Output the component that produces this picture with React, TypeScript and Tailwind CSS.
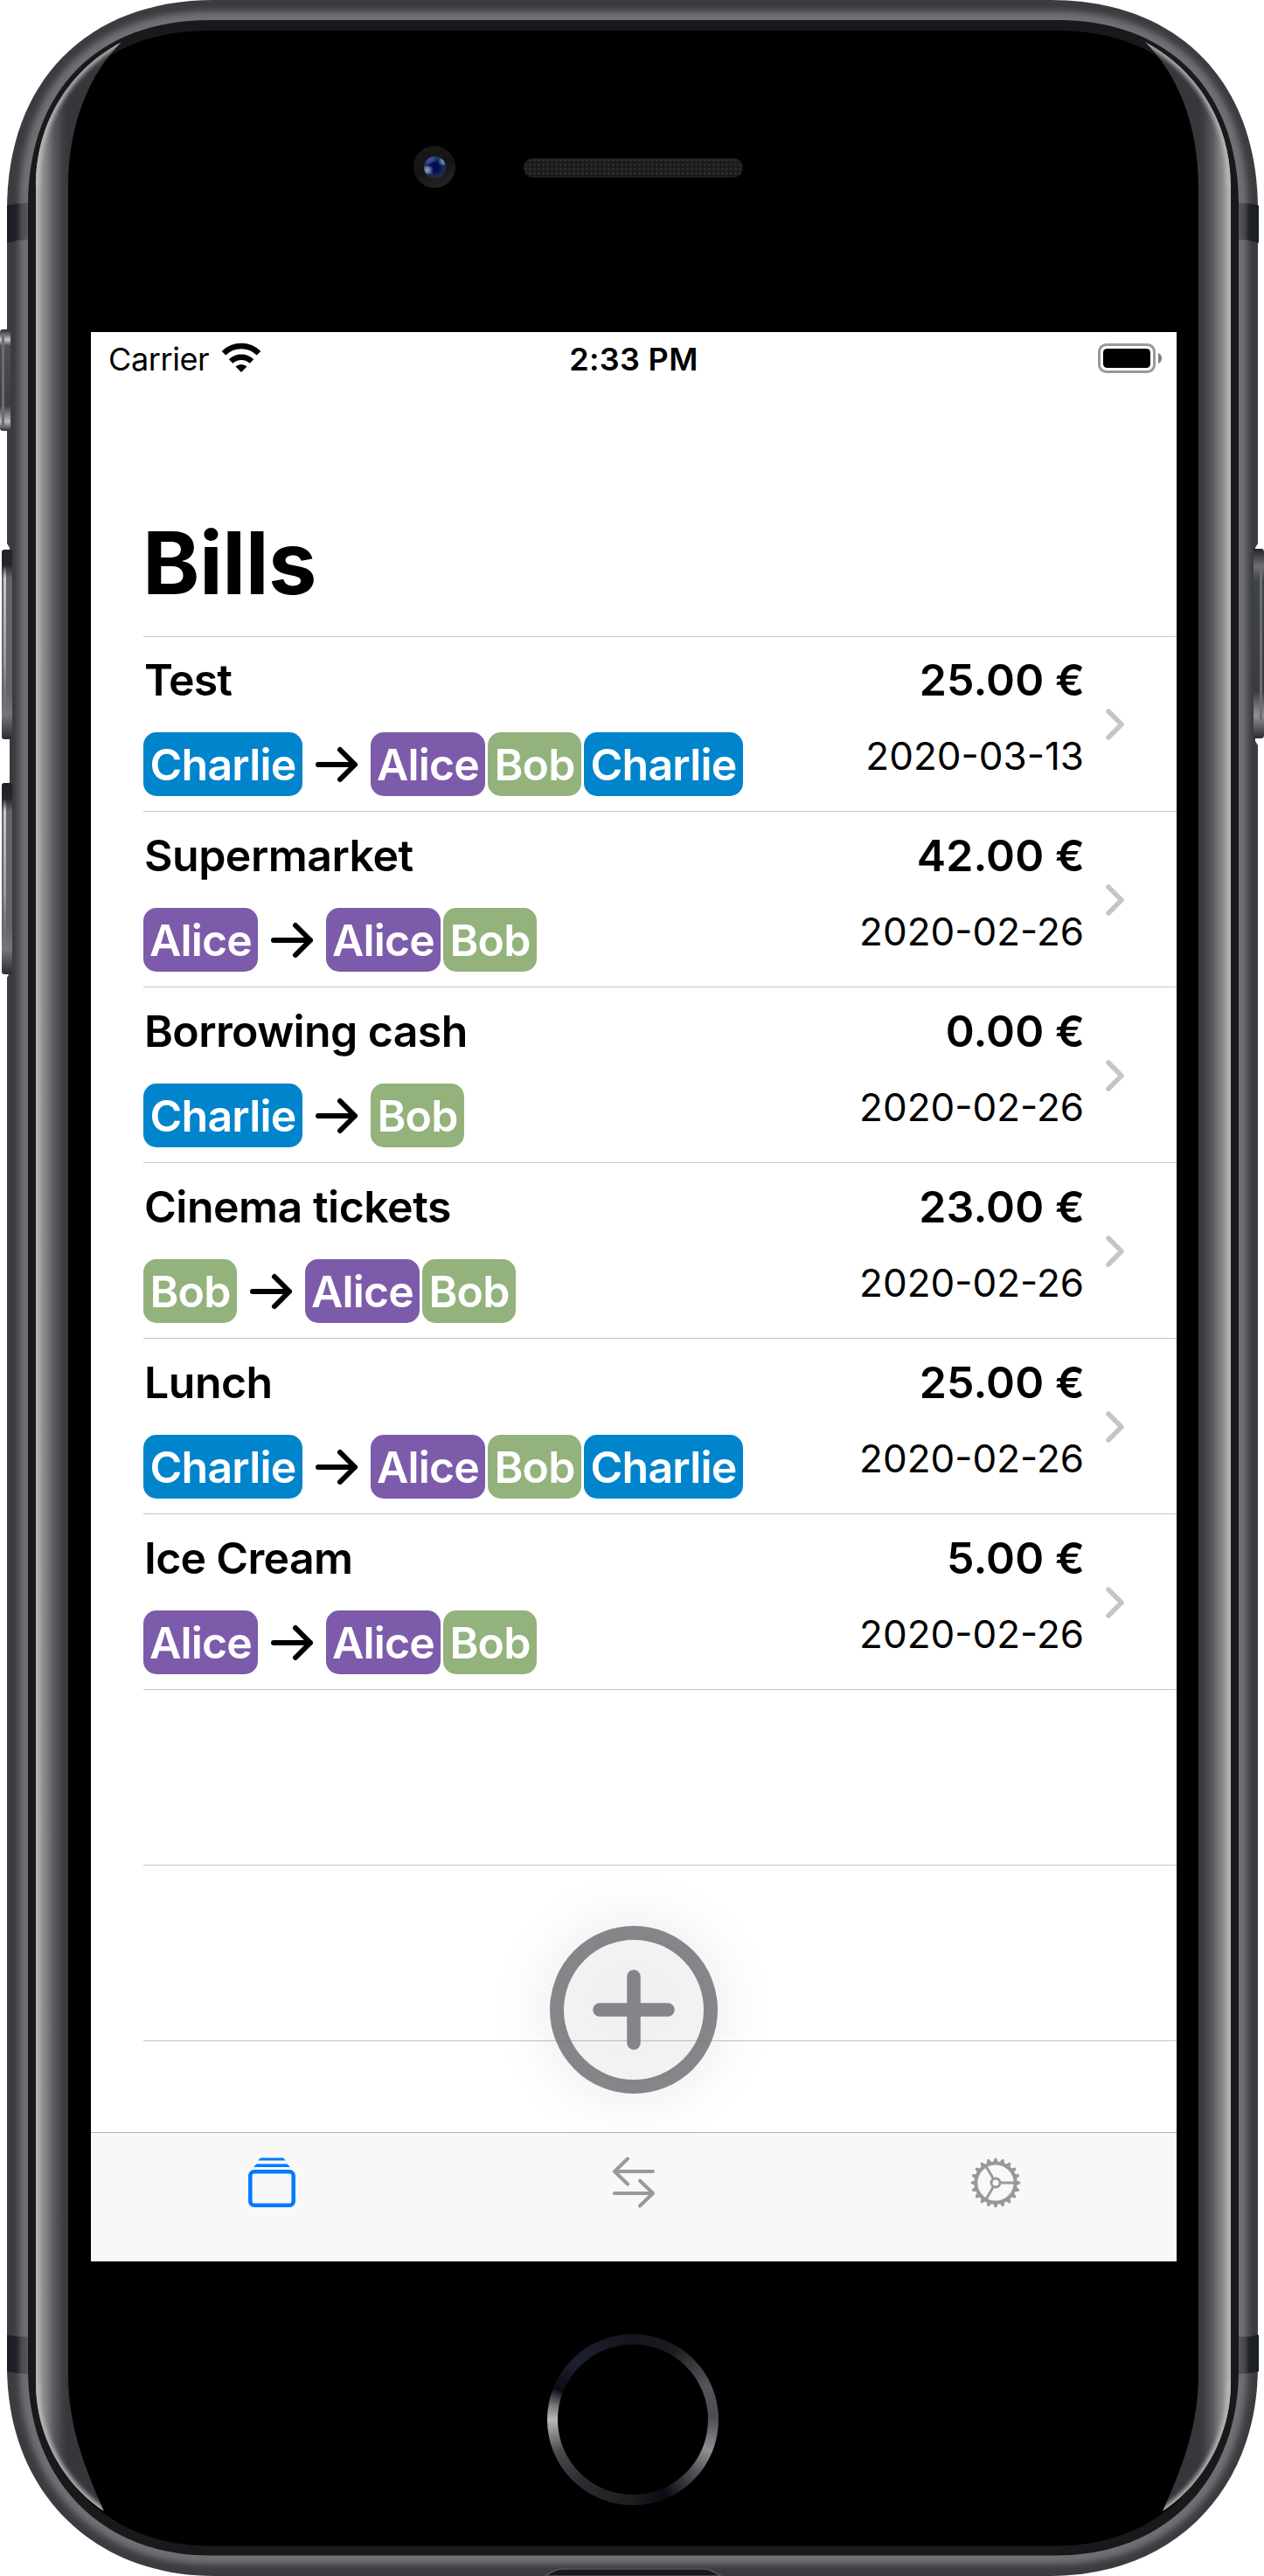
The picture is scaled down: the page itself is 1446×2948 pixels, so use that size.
import React from "react";

type Person = "Alice" | "Bob" | "Charlie";
type Bill = { title: string; tracking: string; from: Person; to: Person[]; amount: string; date: string };

const bills: Bill[] = [
  { title: "Test", tracking: "tracking-[-1px]", from: "Charlie", to: ["Alice", "Bob", "Charlie"], amount: "25.00 €", date: "2020-03-13" },
  { title: "Supermarket", tracking: "tracking-[-0.5px]", from: "Alice", to: ["Alice", "Bob"], amount: "42.00 €", date: "2020-02-26" },
  { title: "Borrowing cash", tracking: "tracking-[-0.6px]", from: "Charlie", to: ["Bob"], amount: "0.00 €", date: "2020-02-26" },
  { title: "Cinema tickets", tracking: "tracking-[-0.5px]", from: "Bob", to: ["Alice", "Bob"], amount: "23.00 €", date: "2020-02-26" },
  { title: "Lunch", tracking: "tracking-[-0.5px]", from: "Charlie", to: ["Alice", "Bob", "Charlie"], amount: "25.00 €", date: "2020-02-26" },
  { title: "Ice Cream", tracking: "tracking-[-0.7px]", from: "Alice", to: ["Alice", "Bob"], amount: "5.00 €", date: "2020-02-26" },
];

const chipStyle: Record<Person, string> = {
  Alice: "w-[131px] bg-[#7d5bab]",
  Bob: "w-[107px] bg-[#93b27c]",
  Charlie: "w-[182px] bg-[#0084cb]",
};

function Chip({ name }: { name: Person }) {
  return (
    <span className={`flex h-[73px] items-center justify-center rounded-[15px] text-[50px] font-semibold leading-[60px] tracking-[-0.8px] text-white ${chipStyle[name]}`}>
      {name}
    </span>
  );
}

function Row({ bill, first }: { bill: Bill; first: boolean }) {
  return (
    <li className={`ml-[60px] flex border-t border-[#c6c6c8] ${first ? "h-[200px] pt-[19px]" : "h-[201px] pt-[20px]"}`}>
      <div className="flex-1">
        <div className={`h-[60px] whitespace-nowrap pl-px text-[50px] font-semibold leading-[60px] ${bill.tracking}`}>{bill.title}</div>
        <div className="mt-[30px] flex items-center gap-[3px]">
          <Chip name={bill.from} />
          <svg className="mx-[9px] h-[48px] w-[54px]" viewBox="0 0 54 48" fill="none" stroke="#000" strokeWidth="6" strokeLinecap="round" strokeLinejoin="round">
            <path d="M6 24H48M31 7L48 24L31 41" />
          </svg>
          {bill.to.map((p) => (
            <Chip key={p} name={p} />
          ))}
        </div>
      </div>
      <div className="text-right">
        <div className="h-[60px] whitespace-pre text-[50px] font-semibold leading-[60px] tracking-[0.1px]">{bill.amount}</div>
        <div className="mt-[27px] pr-px text-[44px] leading-[60px]">{bill.date}</div>
      </div>
      <svg className="ml-[22px] mr-[57px] mt-[61px] h-[40px] w-[26px]" viewBox="0 0 26 40" fill="none" stroke="#c5c5c7" strokeWidth="5.5" strokeLinecap="round" strokeLinejoin="round">
        <path d="M5 5L20 20L5 35" />
      </svg>
    </li>
  );
}

const OUTER =
  "M8 240C8 94 99 0 245 0H1202C1348 0 1439 94 1439 240V2708C1439 2849 1343 2948 1202 2948H245C104 2948 8 2849 8 2708Z";
const INNER =
  "M32 235C32 103 112 23 240 23H1209C1337 23 1417 103 1417 235V2712C1417 2837 1334 2924.500 1209 2924.500H240C115 2924.500 32 2837 32 2712Z";
const GLASS =
  "M41 235C41 113 115 35 240 35H1209C1334 35 1408 113 1408 235V2712C1408 2830 1327 2913.500 1209 2913.500H240C122 2913.500 41 2830 41 2712Z";
const SHEEN =
  "M139 48C81 79 41 138 41 214V2727C41 2790 75 2845 119 2874C95 2820 78 2775 78 2716V215C78 140 103 84 139 48Z";

function Sheen() {
  return (
    <g>
      <path d={SHEEN} fill="url(#sheen)" />
      <g clipPath="url(#sheenClip)">
        <path d="M139 48C81 79 41 138 41 214M41 2727C41 2790 75 2845 119 2874" fill="none" stroke="#b8b8b8" strokeWidth="7" filter="url(#soft2)" />
      </g>
    </g>
  );
}

function AntennaBands() {
  return (
    <g fill="url(#antenna)">
      <path d="M8 235L20 233L32 232V274L20 275L8 278Z" />
      <path d="M8 2672L20 2674H32V2717L20 2716L8 2714Z" />
    </g>
  );
}

function PhoneBody() {
  return (
    <svg className="absolute inset-0 h-[2948px] w-[1446px]" viewBox="0 0 1446 2948">
      <defs>
        <filter id="soft4" x="-5%" y="-5%" width="110%" height="110%"><feGaussianBlur stdDeviation="3.500" /></filter>
        <filter id="soft2" x="-20%" y="-5%" width="140%" height="110%"><feGaussianBlur stdDeviation="2.500" /></filter>
        <clipPath id="bodyClip"><path d={OUTER} /></clipPath>
        <clipPath id="sheenClip"><path d={SHEEN} /></clipPath>
        <linearGradient id="sheen" gradientUnits="userSpaceOnUse" x1="41" x2="78" y1="0" y2="0">
          <stop offset="0" stopColor="#b7b7b6" />
          <stop offset="0.08" stopColor="#adadac" />
          <stop offset="0.24" stopColor="#8a8c89" />
          <stop offset="0.36" stopColor="#7b7d7c" />
          <stop offset="0.55" stopColor="#595b5e" />
          <stop offset="0.85" stopColor="#3d3e43" />
          <stop offset="1" stopColor="#36373b" />
        </linearGradient>
        <linearGradient id="antenna" gradientUnits="userSpaceOnUse" x1="8" x2="32" y1="0" y2="0">
          <stop offset="0" stopColor="#1a1e24" />
          <stop offset="0.45" stopColor="#1f2227" />
          <stop offset="0.7" stopColor="#494a4f" />
          <stop offset="1" stopColor="#58595d" />
        </linearGradient>
        <linearGradient id="key" x1="0" x2="0" y1="0" y2="1">
          <stop offset="0" stopColor="#222226" />
          <stop offset="0.08" stopColor="#26262b" />
          <stop offset="0.15" stopColor="#63646a" />
          <stop offset="0.75" stopColor="#63646a" />
          <stop offset="0.87" stopColor="#74757a" />
          <stop offset="1" stopColor="#2c2d31" />
        </linearGradient>
        <linearGradient id="keyShine" x1="0" x2="0" y1="0" y2="1">
          <stop offset="0" stopColor="#c8c8c6" stopOpacity="0" />
          <stop offset="0.08" stopColor="#c8c8c6" />
          <stop offset="0.6" stopColor="#9a9b9a" />
          <stop offset="1" stopColor="#74757a" stopOpacity="0" />
        </linearGradient>
        <linearGradient id="switch" x1="0" x2="0" y1="0" y2="1">
          <stop offset="0" stopColor="#2b2c30" />
          <stop offset="0.06" stopColor="#77787c" />
          <stop offset="0.1" stopColor="#c5c6c8" />
          <stop offset="0.16" stopColor="#505054" />
          <stop offset="0.75" stopColor="#3d3e42" />
          <stop offset="0.91" stopColor="#b9babd" />
          <stop offset="1" stopColor="#2b2c30" />
        </linearGradient>
        <linearGradient id="power" x1="0" x2="0" y1="0" y2="1">
          <stop offset="0" stopColor="#222327" />
          <stop offset="0.09" stopColor="#6f7075" />
          <stop offset="0.17" stopColor="#404448" />
          <stop offset="0.75" stopColor="#3a3b40" />
          <stop offset="0.88" stopColor="#919297" />
          <stop offset="1" stopColor="#2b2c30" />
        </linearGradient>
        <radialGradient id="lens" cx="0.5" cy="0.5" r="0.5">
          <stop offset="0" stopColor="#020b4e" />
          <stop offset="0.4" stopColor="#04104f" />
          <stop offset="0.75" stopColor="#1c2854" />
          <stop offset="1" stopColor="#232a45" />
        </radialGradient>
        <linearGradient id="lensRim" x1="0.3" y1="0" x2="0.7" y2="1">
          <stop offset="0" stopColor="#191919" />
          <stop offset="0.5" stopColor="#141414" />
          <stop offset="1" stopColor="#262626" />
        </linearGradient>
        <clipPath id="lensClip"><circle cx="497.500" cy="191.500" r="12.500" /></clipPath>
        <pattern id="mesh" width="5" height="5" patternUnits="userSpaceOnUse" x="600" y="182">
          <rect width="5" height="5" fill="#1b1b1b" />
          <rect width="3" height="3" fill="#2a2a2a" />
        </pattern>
      </defs>

      <path d={OUTER} fill="#3b3c40" />
      <g clipPath="url(#bodyClip)">
        <path d={INNER} fill="none" stroke="#6e6f73" strokeWidth="20" filter="url(#soft4)" />
      </g>
      <AntennaBands />
      <g transform="matrix(-1 0 0 1 1448 0)"><AntennaBands /></g>

      <path d="M8 622L11 627V1113L8 1119H0V622Z" fill="#fff" />
      <path d="M1439 622L1436 627V848L1439 853H1446V622Z" fill="#fff" />
      <rect x="0" y="377" width="12" height="116" rx="3" fill="url(#switch)" />
      <rect x="2" y="382" width="3" height="106" fill="#6c6d71" />
      <rect x="2" y="629" width="12" height="217" rx="3" fill="url(#key)" />
      <rect x="4" y="648" width="3" height="180" fill="url(#keyShine)" />
      <rect x="2" y="896" width="12" height="219" rx="3" fill="url(#key)" />
      <rect x="4" y="915" width="3" height="180" fill="url(#keyShine)" />
      <path d="M1434 628H1443Q1446 628 1446 632V841Q1446 845 1443 845H1434Z" fill="url(#power)" />
      <rect x="1441" y="650" width="3" height="175" fill="#6c6d71" />

      <path d={INNER} fill="#18191b" />
      <path d={GLASS} fill="#000" />
      <rect x="32" y="235" width="9" height="2477" fill="#18191b" />
      <rect x="1408" y="235" width="9" height="2477" fill="#18191b" />
      <Sheen />
      <g transform="matrix(-1 0 0 1 1449 0)"><Sheen /></g>

      <circle cx="497" cy="191" r="24" fill="url(#lensRim)" />
      <circle cx="497.500" cy="191.500" r="12.500" fill="url(#lens)" />
      <g clipPath="url(#lensClip)">
        <ellipse cx="492" cy="182.500" rx="7" ry="3.500" fill="#3c62c4" filter="url(#soft2)" transform="rotate(-30 492 183)" />
        <circle cx="508" cy="184" r="4" fill="#7fd0ff" filter="url(#soft2)" />
        <circle cx="489" cy="194.500" r="4" fill="#a9c3ee" filter="url(#soft2)" />
      </g>
      <rect x="599" y="181" width="251" height="22" rx="11" fill="url(#mesh)" />

      <path d="M623 2948L634 2942Q638 2940 644 2940H804Q810 2940 814 2942L825 2948Z" fill="#17181a" stroke="#56575a" strokeWidth="1.500" />
    </svg>
  );
}

function StatusBar() {
  return (
    <header className="flex h-[60px] items-start justify-between pl-[20px] pr-[16px] pt-[11px]">
      <div className="flex w-[400px] items-start">
        <span className="w-[119px] text-[36px] leading-[40px] tracking-[-0.4px]">Carrier</span>
        <svg className="ml-[10px] mt-px h-[36px] w-[46px]" viewBox="0 0 46 36">
          <path d="M23 34L16.500 27.500A9.500 9.500 0 0 1 29.500 27.500Z" />
          <path d="M11 21.500A17.500 17.500 0 0 1 35 21.500" fill="none" stroke="#000" strokeWidth="6.500" />
          <path d="M3 12.300A28.500 28.500 0 0 1 43 12.300" fill="none" stroke="#000" strokeWidth="6.500" />
        </svg>
      </div>
      <span className="pr-[4px] text-[36px] font-semibold leading-[40px] tracking-[0.3px]">2:33 PM</span>
      <div className="flex w-[400px] justify-end">
        <svg className="mt-[2px] h-[34px] w-[74px]" viewBox="0 0 74 34">
          <rect x="1.500" y="1.500" width="63" height="31" rx="8" fill="none" stroke="#999" strokeWidth="3" />
          <rect x="6" y="6" width="54" height="22" rx="4.500" />
          <path d="M69 11Q73 12.500 73 17Q73 21.500 69 23Z" fill="#7d7d7d" />
        </svg>
      </div>
    </header>
  );
}

function TabBar() {
  const teeth = Array.from({ length: 20 }, (_, i) => i * 18);
  return (
    <nav className="grid h-[148px] grid-cols-3 justify-items-center border-t border-[#b2b2b2] bg-[#f8f8f8] pt-[27px]">
      <svg className="h-[60px] w-[60px]" viewBox="0 0 60 60" fill="none" stroke="#007aff">
        <rect x="5.300" y="17.300" width="49.400" height="38.400" rx="4.500" strokeWidth="4.500" />
        <path d="M14 4.500L17 1.500H43L46 4.500Z" fill="#007aff" stroke="none" />
        <path d="M9 12L12.500 8.500H47.500L51 12Z" fill="#007aff" stroke="none" />
      </svg>
      <svg className="h-[60px] w-[60px]" viewBox="0 0 60 60" fill="none" stroke="#999" strokeWidth="4" strokeLinecap="round" strokeLinejoin="round">
        <path d="M52 17H8M23 2.500L8 17L23 31.500" />
        <path d="M8 42H52M37 27.500L52 42L37 56.500" />
      </svg>
      <svg className="h-[60px] w-[60px]" viewBox="-30 -30 60 60" fill="none" stroke="#999">
        <circle r="22.600" strokeWidth="4" />
        <circle r="5" strokeWidth="3" />
        {teeth.map((a) => (
          <path key={a} d="M23 -3.300L28.300 -1V1L23 3.300Z" fill="#999" stroke="none" transform={`rotate(${a})`} />
        ))}
        {[0, 120, 240].map((a) => (
          <path key={a} d="M6 0H22" strokeWidth="3" transform={`rotate(${a})`} />
        ))}
      </svg>
    </nav>
  );
}

export default function App() {
  return (
    <div className="relative h-[2948px] w-[1446px] overflow-hidden bg-white text-black" style={{ fontFamily: 'Inter, "Liberation Sans", sans-serif' }}>
      <PhoneBody />
      <div className="relative flex h-full flex-col pl-[104px] pt-[380px]">
        <div className="relative flex h-[2208px] w-[1242px] flex-col bg-white">
          <StatusBar />
          <h1 className="mt-[144px] h-[144px] pl-[59px] text-[99px] font-bold leading-[120px] tracking-[-0.5px]">Bills</h1>
          <ul className="flex-1">
            {bills.map((b, i) => (
              <Row key={b.title} bill={b} first={i === 0} />
            ))}
            <li className="ml-[60px] h-[201px] border-t border-[#c6c6c8]" />
            <li className="ml-[60px] h-[201px] border-t border-[#c6c6c8]" />
            <li className="ml-[60px] border-t border-[#c6c6c8]" />
          </ul>
          <TabBar />
          <button aria-label="Add bill" className="absolute left-[461px] top-[1760px] flex h-[320px] w-[320px] items-center justify-center bg-[radial-gradient(circle_closest-side,rgba(0,0,0,0.06)_0%,rgba(0,0,0,0.05)_50%,rgba(0,0,0,0.036)_62%,rgba(0,0,0,0.012)_80%,rgba(0,0,0,0)_100%)]">
            <svg className="h-[192px] w-[192px]" viewBox="0 0 192 192" fill="none" stroke="#7c7b80" strokeOpacity="0.92">
              <circle cx="96" cy="96" r="88" strokeWidth="16" />
              <path d="M57 96H135M96 58V134" strokeWidth="15.500" strokeLinecap="round" />
            </svg>
          </button>
        </div>
        <div className="ml-[522px] mt-[83px] h-[196px] w-[196px] rounded-full bg-[conic-gradient(#15161b_0deg,#1b1b1f_30deg,#55565b_65deg,#4c4d52_88deg,#8f9093_112deg,#4c4d50_132deg,#0a0a12_157deg,#1c1d20_180deg,#2b2c30_220deg,#4a4b4e_247deg,#b8b8b8_270deg,#77777a_280deg,#0a0b12_292deg,#1e2030_315deg,#1a1b26_335deg,#15161b_360deg)] p-[12px]">
          <div className="h-full w-full rounded-full bg-black" />
        </div>
      </div>
    </div>
  );
}
